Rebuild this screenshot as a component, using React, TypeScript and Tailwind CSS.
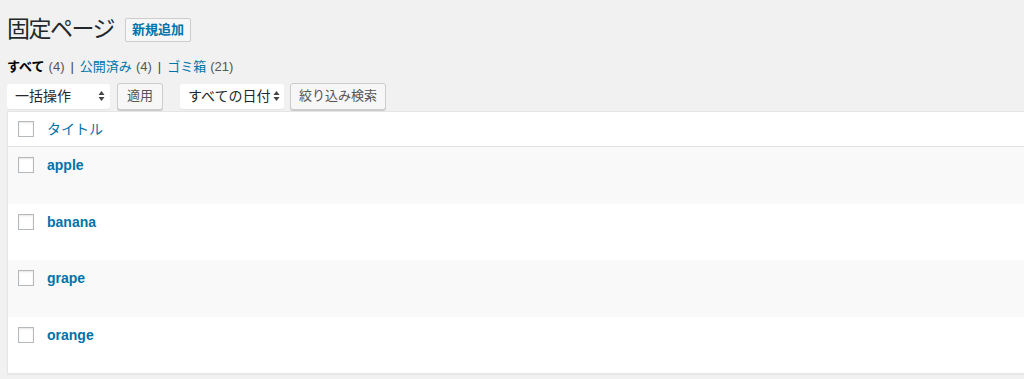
import React from "react";

const font = { fontFamily: '"Liberation Sans", "Noto Sans CJK JP", sans-serif' };

function Arrows() {
  return (
    <svg width="7" height="12" viewBox="0 0 7 12" className="shrink-0">
      <path d="M3.5 1 L6.5 5 L0.5 5 Z" fill="#444" />
      <path d="M3.5 11 L6.5 7 L0.5 7 Z" fill="#444" />
    </svg>
  );
}

function Checkbox() {
  return (
    <div className="w-[16px] h-[16px] border border-[#b4b9be] bg-white shadow-[inset_0_1px_2px_rgba(0,0,0,0.1)] shrink-0" />
  );
}

const rows = ["apple", "banana", "grape", "orange"];

export default function App() {
  return (
    <div className="w-[1024px] h-[379px] bg-[#f1f1f1] overflow-hidden text-[#23282d]" style={font}>
      <div className="pl-[7px]">
        <div className="flex items-center pt-[15px] h-[44px]">
          <h1 className="text-[23px] leading-[29px] font-normal tracking-[-1.5px]">固定ページ</h1>
          <button className="ml-[11px] h-[24px] px-[6px] text-[13px] font-semibold text-[#0073aa] bg-[#f7f7f7] border border-[#ccc] rounded-[2px] leading-[22px]">
            新規追加
          </button>
        </div>
        <div className="mt-[14px] flex items-center text-[13px] leading-[18px] text-[#555]">
          <span className="font-bold text-[#000]">すべて</span>
          <span className="ml-[4px]">(4)</span>
          <span className="mx-[6px] text-[#444]">|</span>
          <span className="text-[#0073aa]">公開済み</span>
          <span className="ml-[4px]">(4)</span>
          <span className="mx-[6px] text-[#444]">|</span>
          <span className="text-[#0073aa]">ゴミ箱</span>
          <span className="ml-[4px]">(21)</span>
        </div>
        <div className="mt-[6px] flex items-center h-[28px]">
          <div className="w-[103px] h-[25px] bg-white rounded-[3px] shadow-[0_1px_1px_rgba(0,0,0,0.06)] flex items-center justify-between pl-[8px] pr-[5px] text-[14px]">
            <span>一括操作</span>
            <Arrows />
          </div>
          <button className="ml-[7px] w-[46px] h-[27px] text-[13px] text-[#555] bg-[#f7f7f7] border border-[#ccc] rounded-[3px] shadow-[0_1px_0_#ccc]">
            適用
          </button>
          <div className="ml-[17px] w-[104px] h-[25px] bg-white rounded-[3px] shadow-[0_1px_1px_rgba(0,0,0,0.06)] flex items-center justify-between pl-[8px] pr-[4px] text-[14px]">
            <span>すべての日付</span>
            <Arrows />
          </div>
          <button className="ml-[6px] w-[96px] h-[27px] text-[13px] text-[#555] bg-[#f7f7f7] border border-[#ccc] rounded-[3px] shadow-[0_1px_0_#ccc]">
            絞り込み検索
          </button>
        </div>
        <div className="mt-[1px] bg-white border border-r-0 border-[#e5e5e5] shadow-[0_1px_1px_rgba(0,0,0,0.04)]">
          <div className="h-[35px] flex items-center border-b border-[#e1e1e1]">
            <div className="pl-[10px]"><Checkbox /></div>
            <span className="ml-[13px] text-[14px] text-[#0073aa]">タイトル</span>
          </div>
          {rows.map((r, i) => (
            <div key={r} className={`h-[56.5px] flex items-start pt-[9px] ${i % 2 === 0 ? "bg-[#f9f9f9]" : "bg-white"}`}>
              <div className="pl-[10px] pt-[1px]"><Checkbox /></div>
              <span className="ml-[13px] text-[14px] font-bold text-[#0073aa] leading-[18px]">{r}</span>
            </div>
          ))}
        </div>
      </div>
    </div>
  );
}
